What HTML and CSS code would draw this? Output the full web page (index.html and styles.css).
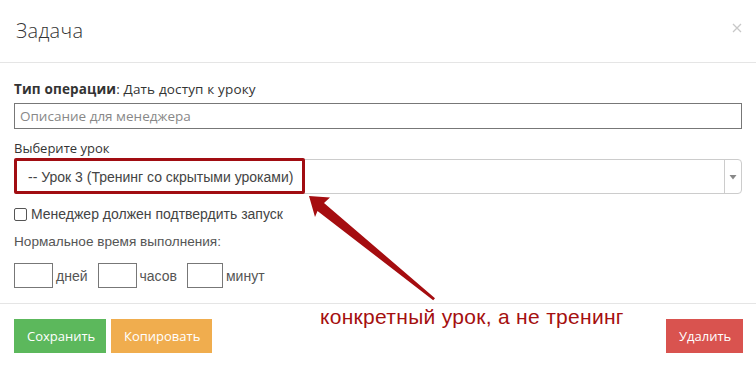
FILE: index.html
```html
<!DOCTYPE html>
<html lang="ru">
<head>
<meta charset="utf-8">
<title>Задача</title>
<link rel="stylesheet" href="styles.css">
</head>
<body>
<div class="modal">
  <div class="modal-header">
    <h4 class="title">Задача</h4>
    <svg class="close" width="10" height="10" viewBox="0 0 10 10"><path d="M1 1L9 9M9 1L1 9" stroke="#c8c8c8" stroke-width="1.3" fill="none"/></svg>
  </div>
  <div class="modal-body">
    <div class="op"><b>Тип операции</b>: Дать доступ к уроку</div>
    <input class="desc" type="text" placeholder="Описание для менеджера">
    <div class="lbl">Выберите урок</div>
    <div class="select">
      <span class="select-text">-- Урок 3 (Тренинг со скрытыми уроками)</span>
      <span class="select-arrow"><svg width="8" height="6" viewBox="0 0 8 6"><path d="M0.5 1H7.5L4 5.5Z" fill="#888"/></svg></span>
      <div class="highlight"></div>
    </div>
    <label class="check"><span class="box"></span>Менеджер должен подтвердить запуск</label>
    <div class="lbl2">Нормальное время выполнения:</div>
    <div class="times">
      <span class="tbox"></span><span class="tlbl">дней</span>
      <span class="tbox"></span><span class="tlbl">часов</span>
      <span class="tbox t3"></span><span class="tlbl">минут</span>
    </div>
  </div>
  <div class="modal-footer">
    <div class="left">
      <button class="btn green">Сохранить</button>
      <button class="btn orange">Копировать</button>
    </div>
    <button class="btn red">Удалить</button>
  </div>
  <div class="note">конкретный урок, а не тренинг</div>
  <svg class="arrow" width="140" height="115" viewBox="0 0 140 115">
    <path d="M9 6 L30 7.5 L24 13 L135 108.2 L133.2 110.2 L17.5 21 L15 27 Z" fill="#a50d10"/>
  </svg>
</div>
</body>
</html>
```
FILE: styles.css
```css
* { box-sizing: border-box; }
body {
  margin: 0;
  background: #fff;
  font-family: "Open Sans", "Liberation Sans", sans-serif;
  color: #333;
}
.modal {
  position: relative;
  width: 756px;
  height: 365px;
}
.modal-header {
  height: 63px;
  border-bottom: 1px solid #e5e5e5;
  display: flex;
  align-items: center;
  justify-content: space-between;
  padding: 0 14px 2px 16px;
}
.title {
  margin: 0;
  font-size: 20px;
  font-weight: 300;
  color: #333;
  letter-spacing: 0.3px;
}
.close { margin-right: 0; margin-top: -4px; }
.modal-body {
  padding: 16px 14px 15px 14px;
  display: flex;
  flex-direction: column;
}
.op {
  font-size: 13.5px;
  line-height: 20px;
  color: #333;
  letter-spacing: 0.15px;
}
.op b { font-weight: 700; }
.desc {
  margin-top: 4px;
  width: 728px;
  height: 26px;
  border: 1px solid #777;
  border-radius: 0;
  padding: 0 5px;
  font-family: "Open Sans", sans-serif;
  font-size: 13.5px;
  outline: none;
}
.desc::placeholder { color: #888; }
.lbl {
  margin-top: 10px;
  font-size: 13px;
  line-height: 18px;
  color: #333;
}
.select {
  position: relative;
  margin-top: 2px;
  width: 728px;
  height: 35px;
  border: 1px solid #ccc;
  border-radius: 4px;
  display: flex;
  align-items: center;
}
.select-text {
  flex: 1;
  padding-left: 13px;
  font-family: "Liberation Sans", Arial, sans-serif;
  font-size: 14px;
  color: #444;
}
.select-arrow {
  width: 17px;
  height: 100%;
  border-left: 1px solid #ccc;
  display: flex;
  align-items: center;
  justify-content: center;
}
.highlight {
  position: absolute;
  left: -1px;
  top: -2px;
  width: 291px;
  height: 36px;
  border: 3px solid #a10d12;
  border-radius: 2px;
}
.check {
  margin-top: 10px;
  display: flex;
  align-items: center;
  font-family: "Liberation Sans", Arial, sans-serif;
  font-size: 14px;
  line-height: 20px;
  color: #444;
}
.box {
  width: 13px;
  height: 13px;
  border: 1px solid #555;
  border-radius: 2px;
  margin-right: 4px;
}
.lbl2 {
  margin-top: 8px;
  font-family: "Liberation Sans", Arial, sans-serif;
  font-size: 13.6px;
  line-height: 20px;
  color: #555;
}
.times {
  margin-top: 11px;
  display: flex;
  align-items: center;
  font-family: "Liberation Sans", Arial, sans-serif;
  font-size: 14px;
  color: #555;
}
.tbox {
  width: 39px;
  height: 25px;
  border: 1px solid #777;
}
.tbox.t3 { width: 36px; }
.tlbl { margin-left: 3px; margin-right: 10px; }
.modal-footer {
  border-top: 1px solid #e5e5e5;
  padding: 15px 13px 0 14px;
  display: flex;
  justify-content: space-between;
}
.left { display: flex; gap: 5px; }
.btn {
  height: 34px;
  border: none;
  border-radius: 0;
  color: #fff;
  font-family: "Open Sans", sans-serif;
  font-size: 13px;
  padding: 0 13px;
}
.green { background: #5cb85c; width: 92px; }
.orange { background: #f0ad4e; width: 101px; }
.red { background: #d9534f; width: 77px; }
.note {
  position: absolute;
  left: 320px;
  top: 305px;
  font-family: "Liberation Sans", Arial, sans-serif;
  font-size: 21px;
  color: #a50f0f;
  letter-spacing: 0.3px;
}
.arrow {
  position: absolute;
  left: 300px;
  top: 190px;
}
```
